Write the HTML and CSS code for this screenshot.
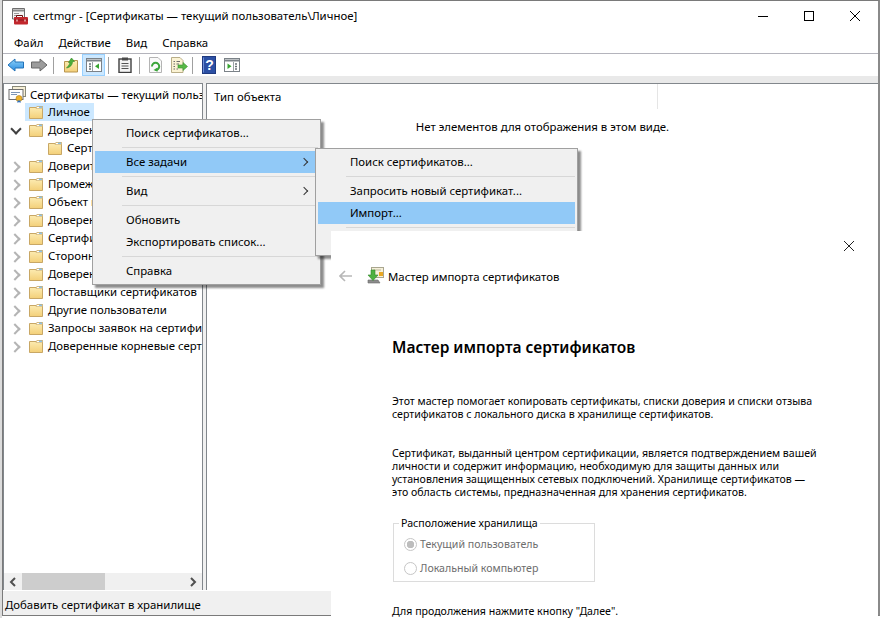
FILE: index.html
```html
<!DOCTYPE html>
<html lang="ru">
  <head>
    <meta charset="UTF-8" />
    <title>certmgr</title>
    <link rel="stylesheet" href="styles.css">
  </head>
  <body>
    <svg class="defs" width="0" height="0">
      <defs>
        <linearGradient id="folderFill" x1="0" y1="0" x2="0" y2="1">
          <stop offset="0" stop-color="#fdeeb6" />
          <stop offset="1" stop-color="#f3cf78" />
        </linearGradient>
        <linearGradient id="blueFill" x1="0" y1="0" x2="0" y2="1">
          <stop offset="0" stop-color="#8fd3fa" />
          <stop offset="1" stop-color="#2a8be0" />
        </linearGradient>
        <symbol id="folder" viewBox="0 0 16 16">
          <path d="M1.5 3.5V14.5H14.5V2.5H9L8 3.5Z" fill="url(#folderFill)" stroke="#c8a765" />
          <path d="M9 2.5H14.5V4.5H8Z" fill="#fff" stroke="#c8a765" stroke-width="0.6" />
          <path d="M11 3.2H14" stroke="#5aa7dc" />
        </symbol>
      </defs>
    </svg>

    <div class="window">
      <header class="titlebar">
        <svg class="app-icon" width="17" height="18" viewBox="0 0 17 18">
          <path d="M1.5 1.5H13.5V12H1.5Z" fill="#f4f4f4" stroke="#6e6e6e" />
          <path d="M2 3.5H13" stroke="#8a8a8a" stroke-width="2" />
          <path d="M3 6.5H8M3 8.5H7M3 10.5H5" stroke="#9a9a9a" />
          <path d="M5.5 10V8.5H11.5V10" fill="none" stroke="#6b1414" />
          <rect x="3" y="10" width="14" height="7.5" rx="1" fill="#c1272d" />
          <path d="M3 13H17" stroke="#8c1a1e" />
          <path d="M6 12.5V14.5M14 12.5V14.5" stroke="#f2c2c2" stroke-width="1.4" />
        </svg>
        <span class="title-text">certmgr - [Сертификаты — текущий пользователь\Личное]</span>
        <div class="win-controls">
          <span class="win-btn"><svg width="12" height="12" viewBox="0 0 12 12"><path d="M1 6.5H11" stroke="#000" /></svg></span>
          <span class="win-btn"><svg width="12" height="12" viewBox="0 0 12 12"><rect x="1.5" y="1.5" width="9" height="9" fill="none" stroke="#000" /></svg></span>
          <span class="win-btn"><svg width="12" height="12" viewBox="0 0 12 12"><path d="M1 1L11 11M11 1L1 11" stroke="#000" /></svg></span>
        </div>
      </header>

      <nav class="menubar">
        <span>Файл</span>
        <span>Действие</span>
        <span>Вид</span>
        <span>Справка</span>
      </nav>

      <div class="toolbar">
        <span class="tool">
          <svg width="18" height="16" viewBox="0 0 18 16"><path d="M1 8L8 2V5H16.5V11H8V14Z" fill="url(#blueFill)" stroke="#2272b8" /></svg>
        </span>
        <span class="tool">
          <svg width="18" height="16" viewBox="0 0 18 16"><path d="M17 8L10 2V5H1.5V11H10V14Z" fill="#9c9c9c" stroke="#686868" /></svg>
        </span>
        <span class="tool-sep tool-sep-wide"></span>
        <span class="tool">
          <svg width="16" height="16" viewBox="0 0 16 16">
            <path d="M1.5 4.5V15H14.5V3.5H9L8 4.5Z" fill="url(#folderFill)" stroke="#b8954f" />
            <path d="M3.5 11C5 9 6.5 8 7 5.5L5.5 5.5L8.5 1L11.5 4.5H9.5C9.5 8 7 10.5 3.5 11Z" fill="#4fae3a" stroke="#2f8a24" stroke-width="0.6" />
          </svg>
        </span>
        <span class="tool tool-active">
          <svg width="16" height="16" viewBox="0 0 16 16">
            <rect x="0.5" y="1.5" width="15" height="13" fill="#fff" stroke="#7b8288" />
            <path d="M1 3.5H15" stroke="#7b8288" stroke-width="2" />
            <path d="M3 7H5M3 9.5H5M3 12H5" stroke="#6a7278" stroke-width="1.4" />
            <path d="M6.5 5V14" stroke="#9aa1a6" />
            <path d="M13 6.5V12L9 9.2Z" fill="#37a531" />
          </svg>
        </span>
        <span class="tool-sep"></span>
        <span class="tool">
          <svg width="14" height="16" viewBox="0 0 14 16">
            <rect x="1" y="2" width="12" height="13.5" fill="#f4f4f4" stroke="#3f3f3f" stroke-width="1.4" />
            <rect x="4" y="0.5" width="6" height="3" fill="#4a4a4a" />
            <path d="M3.5 6.5H10.5M3.5 9H10.5M3.5 11.5H10.5" stroke="#555" />
          </svg>
        </span>
        <span class="tool-sep"></span>
        <span class="tool">
          <svg width="15" height="16" viewBox="0 0 15 16">
            <path d="M1.5 0.5H10L13.5 4V15.5H1.5Z" fill="#fafafa" stroke="#b4b4b4" />
            <path d="M4 9.5A3.6 3.6 0 1 1 7.5 13" fill="none" stroke="#3ba53a" stroke-width="2" />
            <path d="M9.5 10.5V14.8L5.5 13Z" fill="#3ba53a" />
          </svg>
        </span>
        <span class="tool">
          <svg width="18" height="16" viewBox="0 0 18 16">
            <path d="M1.5 0.5H10L13 3.5V15.5H1.5Z" fill="#fbf3d4" stroke="#b9ae88" />
            <path d="M3.5 4.5H5M6.5 4.5H10M3.5 7H5M6.5 7H9M3.5 9.5H5M3.5 12H5M6.5 12H8" stroke="#6d6d6d" />
            <path d="M8 8H13V5.5L17.5 9.5L13 13.5V11H8Z" fill="#58b947" stroke="#3b9430" stroke-width="0.6" />
          </svg>
        </span>
        <span class="tool-sep tool-sep-tight"></span>
        <span class="tool">
          <svg width="14" height="18" viewBox="0 0 14 18">
            <rect x="0.5" y="0.5" width="13" height="17" fill="#2c50a4" stroke="#1f3a80" />
            <path d="M1.5 1.5V16.5" stroke="#6f8fd6" />
            <text x="7.5" y="14" class="help-mark">?</text>
          </svg>
        </span>
        <span class="tool">
          <svg width="16" height="16" viewBox="0 0 16 16">
            <rect x="0.5" y="1.5" width="15" height="13" fill="#fff" stroke="#7b8288" />
            <path d="M1 3.5H15" stroke="#7b8288" stroke-width="2" />
            <path d="M11 7H13M11 9.5H13M11 12H13" stroke="#6a7278" stroke-width="1.4" />
            <path d="M9.5 5V14" stroke="#9aa1a6" />
            <path d="M3.5 6.5V12L7.5 9.2Z" fill="#37a531" />
          </svg>
        </span>
      </div>
      <div class="strip"></div>

      <div class="panes">
        <aside class="tree-pane">
          <ul class="tree">
            <li class="row row-root">
              <svg class="root-icon" width="18" height="17" viewBox="0 0 18 17">
                <rect x="4.5" y="0.5" width="13" height="10" fill="#f6efd6" stroke="#8a8a7a" />
                <rect x="1" y="3.5" width="14" height="10" fill="#fff" stroke="#6f6f6f" />
                <path d="M3 6.5H12M3 8.5H9" stroke="#7d96b8" />
                <circle cx="11" cy="12.5" r="3" fill="#eeb22c" stroke="#b07d12" stroke-width="0.6" />
                <path d="M9.5 14.5V17L11 16L12.5 17V14.5" fill="#2d6fc0" />
              </svg>
              <span>Сертификаты — текущий пользователь</span>
            </li>
            <li class="row">
              <span class="chev"></span>
              <span class="node node-selected"><svg class="folder" width="16" height="16"><use href="#folder" /></svg>Личное</span>
            </li>
            <li class="row">
              <span class="chev chev-open"></span>
              <span class="node"><svg class="folder" width="16" height="16"><use href="#folder" /></svg>Доверенные корневые центры сертификации</span>
            </li>
            <li class="row row-child">
              <span class="node"><svg class="folder" width="16" height="16"><use href="#folder" /></svg>Сертификаты</span>
            </li>
            <li class="row">
              <span class="chev chev-closed"></span>
              <span class="node"><svg class="folder" width="16" height="16"><use href="#folder" /></svg>Доверительные отношения в предприятии</span>
            </li>
            <li class="row">
              <span class="chev chev-closed"></span>
              <span class="node"><svg class="folder" width="16" height="16"><use href="#folder" /></svg>Промежуточные центры сертификации</span>
            </li>
            <li class="row">
              <span class="chev chev-closed"></span>
              <span class="node"><svg class="folder" width="16" height="16"><use href="#folder" /></svg>Объект пользователя Active Directory</span>
            </li>
            <li class="row">
              <span class="chev chev-closed"></span>
              <span class="node"><svg class="folder" width="16" height="16"><use href="#folder" /></svg>Доверенные издатели</span>
            </li>
            <li class="row">
              <span class="chev chev-closed"></span>
              <span class="node"><svg class="folder" width="16" height="16"><use href="#folder" /></svg>Сертификаты, к которым нет доверия</span>
            </li>
            <li class="row">
              <span class="chev chev-closed"></span>
              <span class="node"><svg class="folder" width="16" height="16"><use href="#folder" /></svg>Сторонние корневые центры сертификации</span>
            </li>
            <li class="row">
              <span class="chev chev-closed"></span>
              <span class="node"><svg class="folder" width="16" height="16"><use href="#folder" /></svg>Доверенные лица</span>
            </li>
            <li class="row">
              <span class="chev chev-closed"></span>
              <span class="node"><svg class="folder" width="16" height="16"><use href="#folder" /></svg>Поставщики сертификатов</span>
            </li>
            <li class="row">
              <span class="chev chev-closed"></span>
              <span class="node"><svg class="folder" width="16" height="16"><use href="#folder" /></svg>Другие пользователи</span>
            </li>
            <li class="row">
              <span class="chev chev-closed"></span>
              <span class="node"><svg class="folder" width="16" height="16"><use href="#folder" /></svg>Запросы заявок на сертификат</span>
            </li>
            <li class="row">
              <span class="chev chev-closed"></span>
              <span class="node"><svg class="folder" width="16" height="16"><use href="#folder" /></svg>Доверенные корневые сертификаты смарт-карты</span>
            </li>
          </ul>
          <div class="hscroll">
            <span class="hscroll-arrow"><svg width="8" height="10" viewBox="0 0 8 10"><path d="M6 1L2 5L6 9" fill="none" stroke="#505050" stroke-width="2" /></svg></span>
            <span class="hscroll-thumb"></span>
            <span class="hscroll-arrow"><svg width="8" height="10" viewBox="0 0 8 10"><path d="M2 1L6 5L2 9" fill="none" stroke="#505050" stroke-width="2" /></svg></span>
          </div>
        </aside>

        <main class="list-pane">
          <div class="list-head">
            <span class="list-col">Тип объекта</span>
          </div>
          <p class="list-empty">Нет элементов для отображения в этом виде.</p>
        </main>
      </div>

      <footer class="statusbar">Добавить сертификат в хранилище</footer>
    </div>

    <ul class="menu menu-context">
      <li class="menu-item">Поиск сертификатов...</li>
      <li class="menu-sep"></li>
      <li class="menu-item menu-item-hot menu-item-sub">Все задачи</li>
      <li class="menu-sep"></li>
      <li class="menu-item menu-item-sub">Вид</li>
      <li class="menu-sep"></li>
      <li class="menu-item">Обновить</li>
      <li class="menu-item">Экспортировать список...</li>
      <li class="menu-sep"></li>
      <li class="menu-item">Справка</li>
    </ul>

    <ul class="menu menu-tasks">
      <li class="menu-item">Поиск сертификатов...</li>
      <li class="menu-sep"></li>
      <li class="menu-item">Запросить новый сертификат...</li>
      <li class="menu-item menu-item-hot">Импорт...</li>
      <li class="menu-sep"></li>
      <li class="menu-item"></li>
    </ul>

    <section class="wizard">
      <div class="wizard-top">
        <svg width="12" height="12" viewBox="0 0 12 12"><path d="M1 1L11 11M11 1L1 11" stroke="#222" /></svg>
      </div>
      <div class="wizard-head">
        <svg class="wizard-back" width="13" height="12" viewBox="0 0 13 12"><path d="M6 1L1 6L6 11M1 6H13" fill="none" stroke="#b8b8b8" stroke-width="1.6" /></svg>
        <svg class="wizard-icon" width="17" height="18" viewBox="0 0 17 18">
          <rect x="4.5" y="0.5" width="12" height="10" fill="#f6f0da" stroke="#a9a68f" />
          <path d="M6.5 3H14" stroke="#bdb89c" />
          <rect x="12" y="5" width="4" height="4" fill="#e9a823" />
          <path d="M1 13H11L13 16H1Z" fill="#8c8c8c" stroke="#6a6a6a" stroke-width="0.6" />
          <path d="M4 3H8V8H11L6 13.5L1 8H4Z" fill="#4eb13f" stroke="#30882a" stroke-width="0.6" />
        </svg>
        <span>Мастер импорта сертификатов</span>
      </div>
      <div class="wizard-body">
        <h1>Мастер импорта сертификатов</h1>
        <p class="wizard-text">
          Этот мастер помогает копировать сертификаты, списки доверия и списки отзыва<br>
          сертификатов с локального диска в хранилище сертификатов.
        </p>
        <p class="wizard-text">
          Сертификат, выданный центром сертификации, является подтверждением вашей<br>
          личности и содержит информацию, необходимую для защиты данных или<br>
          установления защищенных сетевых подключений. Хранилище сертификатов —<br>
          это область системы, предназначенная для хранения сертификатов.
        </p>
        <fieldset class="store-box">
          <legend>Расположение хранилища</legend>
          <div class="radio-row radio-row-first"><span class="radio radio-on"></span>Текущий пользователь</div>
          <div class="radio-row"><span class="radio"></span>Локальный компьютер</div>
        </fieldset>
        <p class="wizard-next">Для продолжения нажмите кнопку "Далее".</p>
      </div>
    </section>
  </body>
</html>
```

FILE: styles.css
```css
:root {
  --chrome: #f0f0f0;
  --edge: #7a7a7a;
  --hot: #91c9f7;
  --select: #cce8ff;
  --sep: #d7d7d7;
}

* {
  box-sizing: border-box;
  margin: 0;
  padding: 0;
}

html,
body {
  height: 618px;
  overflow: hidden;
}

body {
  font-family: "Noto Sans", "Open Sans", sans-serif;
  font-size: 11.4px;
  color: #000;
  background: linear-gradient(90deg, #dcdcdc 2px, #fff 2px);
  position: relative;
}

ul {
  list-style: none;
}

.defs {
  position: absolute;
}

/* main window */
.window {
  width: 878px;
  height: 616px;
  margin-left: 2px;
  background: #fff;
  border: 1px solid var(--edge);
  border-right: 2px solid #8a8a8a;
  display: flex;
  flex-direction: column;
}

.titlebar {
  height: 30px;
  flex: none;
  display: flex;
  align-items: center;
  padding-left: 8px;
}

.app-icon {
  margin-right: 5px;
}

.title-text {
  margin-top: -1px;
}

.win-controls {
  margin-left: auto;
  display: flex;
}

.win-btn {
  width: 46px;
  height: 30px;
  display: flex;
  align-items: center;
  justify-content: center;
}

.menubar {
  height: 23px;
  flex: none;
  display: flex;
  align-items: center;
  gap: 15px;
  padding-left: 11px;
  border-bottom: 1px solid #b4b4bc;
}

.toolbar {
  height: 22px;
  flex: none;
  display: flex;
  align-items: center;
  padding-left: 1px;
}

.tool {
  width: 23px;
  height: 22px;
  display: flex;
  align-items: center;
  justify-content: center;
}

.tool-active {
  background: var(--select);
  border: 1px solid #99d1ff;
}

.tool-sep {
  width: 1px;
  height: 17px;
  margin: 0 4px 0 3px;
  background: #a0a0a0;
}

.tool-sep-wide {
  margin-right: 5px;
}

.tool-sep-tight {
  margin-left: 2px;
}

.help-mark {
  font-family: "Liberation Sans", sans-serif;
  font-size: 14px;
  font-weight: bold;
  fill: #fff;
  text-anchor: middle;
}

.strip {
  height: 7px;
  flex: none;
  background: #e9e9e9;
}

/* panes */
.panes {
  flex: 1;
  min-height: 0;
  display: flex;
  background: var(--chrome);
  gap: 3px;
}

.tree-pane {
  width: 200px;
  flex: none;
  background: #fff;
  border: 1px solid #82878c;
  border-bottom: 0;
  display: flex;
  flex-direction: column;
  overflow: hidden;
}

.tree {
  flex: 1;
  padding-top: 1px;
}

.row {
  height: 18px;
  display: flex;
  align-items: center;
  white-space: nowrap;
  padding-left: 7px;
}

.row-root {
  padding-left: 4px;
}

.root-icon {
  margin-right: 4px;
  flex: none;
}

.row-child {
  padding-left: 40px;
}

.chev {
  width: 14px;
  height: 18px;
  flex: none;
  position: relative;
}

.chev-closed::before,
.chev-open::before {
  content: "";
  position: absolute;
  width: 6px;
  height: 6px;
  left: 0;
  top: 6px;
  border-right: 2px solid #b4b4b4;
  border-top: 2px solid #b4b4b4;
  transform: rotate(45deg);
}

.chev-open::before {
  left: 1px;
  top: 4px;
  border-color: #404040;
  transform: rotate(135deg);
}

.node {
  height: 18px;
  flex: none;
  display: flex;
  align-items: center;
  padding: 0 4px 1px 3px;
}

.node-selected {
  background: var(--select);
}

.folder {
  margin-right: 4px;
  flex: none;
}

.hscroll {
  height: 17px;
  flex: none;
  display: flex;
  background: var(--chrome);
  align-items: stretch;
}

.hscroll-arrow {
  width: 18px;
  flex: none;
  display: flex;
  align-items: center;
  justify-content: center;
}

.hscroll-arrow:last-child {
  margin-left: auto;
}

.hscroll-thumb {
  width: 83px;
  background: #cdcdcd;
}

.list-pane {
  flex: 1;
  background: #fff;
  border: 1px solid #82878c;
  border-bottom: 0;
  border-right: 0;
  overflow: hidden;
}

.list-head {
  height: 25px;
  width: 451px;
  display: flex;
  align-items: center;
  padding-left: 7px;
  border-right: 1px solid #e5e5e5;
}

.list-empty {
  margin-top: 10px;
  text-align: center;
  line-height: 16px;
}

.statusbar {
  height: 25px;
  flex: none;
  display: flex;
  align-items: center;
  padding: 2px 0 0 2px;
  background: var(--chrome);
  border-top: 1px solid #fff;
}

/* context menus */
.menu {
  position: absolute;
  background: var(--chrome);
  border: 1px solid #a0a0a0;
  padding: 2px;
  box-shadow: 3px 3px 2px rgba(0, 0, 0, 0.45);
}

.menu-context {
  left: 92px;
  top: 119px;
  width: 229px;
}

.menu-tasks {
  left: 315px;
  top: 148px;
  width: 263px;
}

.menu-item {
  height: 22px;
  line-height: 22px;
  padding-left: 31px;
  position: relative;
  white-space: nowrap;
}

.menu-tasks .menu-item {
  padding-left: 32px;
}

.menu-item-hot {
  background: var(--hot);
}

.menu-item-sub::after {
  content: "";
  position: absolute;
  right: 11px;
  top: 8px;
  width: 5px;
  height: 5px;
  border-right: 1px solid #333;
  border-top: 1px solid #333;
  transform: rotate(45deg);
}

.menu-sep {
  height: 1px;
  margin: 3px 0 3px 27px;
  background: var(--sep);
}

.menu-tasks .menu-sep {
  margin-left: 28px;
}

/* wizard */
.wizard {
  position: absolute;
  left: 331px;
  top: 231px;
  width: 547px;
  height: 387px;
  background: #fff;
  overflow: hidden;
}

.wizard-top {
  height: 30px;
  display: flex;
  align-items: center;
  justify-content: flex-end;
  padding-right: 23px;
}

.wizard-head {
  height: 30px;
  display: flex;
  align-items: center;
  padding-left: 8px;
}

.wizard-back {
  margin-right: 15px;
}

.wizard-icon {
  margin-right: 4px;
}

.wizard-body {
  padding-left: 61px;
  white-space: nowrap;
  font-size: 10.6px;
}

.wizard-body h1 {
  font-size: 15.5px;
  font-weight: 600;
  line-height: 20px;
  margin: 46px 0 0;
}

.wizard-text {
  line-height: 13px;
  margin-top: 38px;
}

.wizard-text + .wizard-text {
  margin-top: 26px;
}

.store-box {
  width: 202px;
  height: 66px;
  margin: 17px 0 0 1px;
  border: 1px solid #dcdcdc;
}

.store-box legend {
  margin-left: 5px;
  padding: 0 2px;
  line-height: 14px;
}

.radio-row {
  height: 24px;
  display: flex;
  align-items: center;
  padding-left: 10px;
  color: #6d6d6d;
}

.radio-row-first {
  margin-top: 2px;
}

.radio {
  width: 13px;
  height: 13px;
  border: 1px solid #c6c6c6;
  border-radius: 50%;
  margin-right: 3px;
  background: #fff;
}

.radio-on {
  background: radial-gradient(circle, #bdbdbd 3.5px, #fff 4px);
}

.wizard-next {
  margin-top: 21px;
  line-height: 16px;
}
```
